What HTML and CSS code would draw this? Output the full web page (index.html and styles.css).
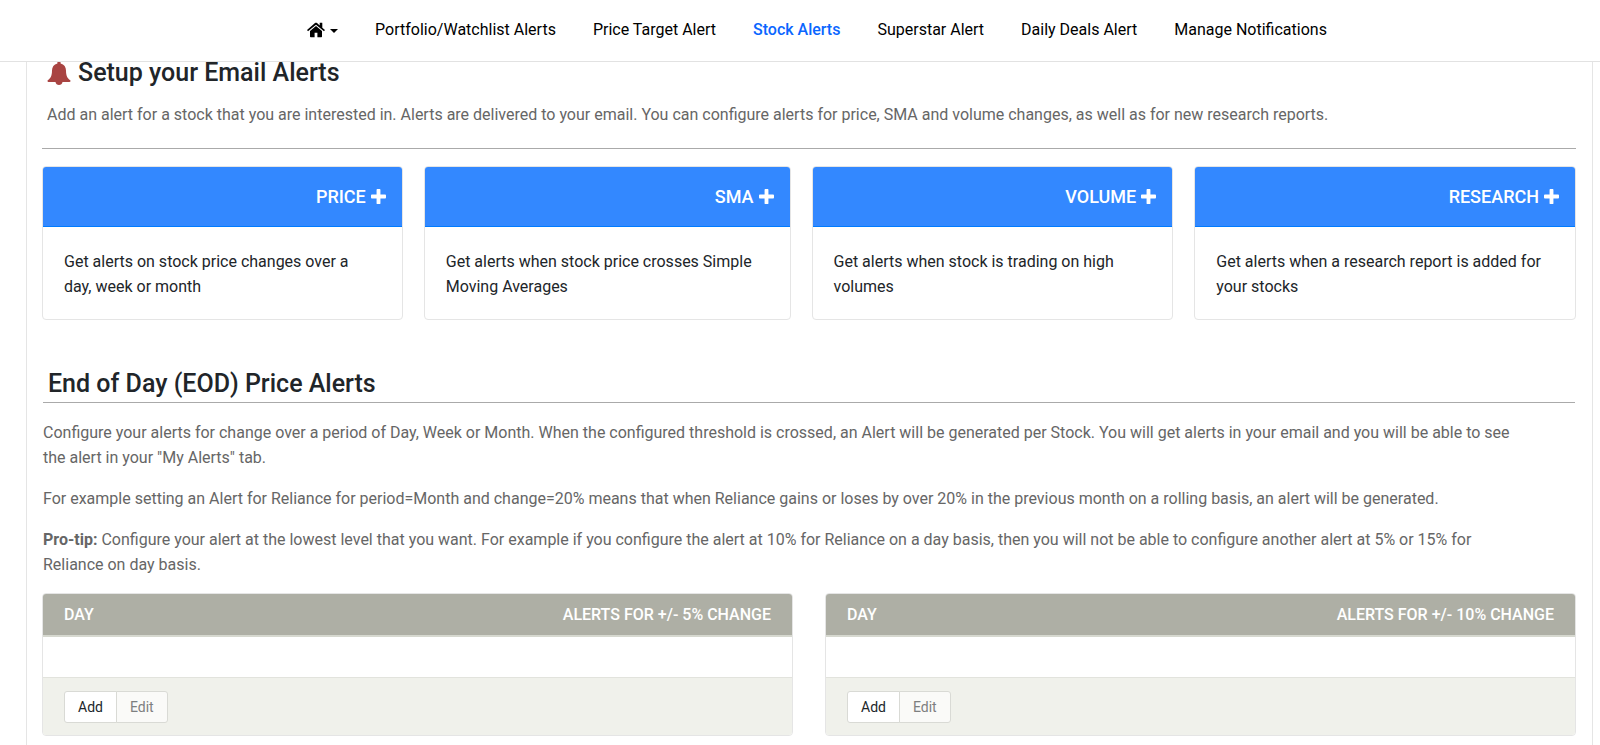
FILE: index.html
```html
<!DOCTYPE html>
<html lang="en">
  <head>
    <meta charset="UTF-8" />
    <meta name="viewport" content="width=device-width, initial-scale=1.0" />
    <title>Stock Alerts</title>
    <link rel="stylesheet" href="styles.css">
  </head>
  <body>
    <nav class="navbar">
      <a href="#" class="nav-link home" aria-label="Home">
        <svg class="icon-home" viewBox="0 0 18 16" aria-hidden="true">
          <path d="M9 4 3 9v5.500c0 .4.3.7.7.7h3.900V10.800h2.800v4.400h3.900c.4 0 .7-.3.7-.7V9z" />
          <path d="M17.700 7.800 15.300 5.700V1.200c0-.3-.1-.4-.4-.4h-1.800c-.3 0-.4.1-.4.4v2.200L10 1.100c-.6-.5-1.400-.5-2 0L.3 7.800c-.2.1-.2.3-.1.500l.6.7c.2.2.4.2.5.1L9 2.700l7.700 6.400c.1.1.3.1.5-.1l.6-.7c.1-.2.1-.4-.1-.5z" />
        </svg>
        <span class="caret"></span>
      </a>
      <a href="#" class="nav-link">Portfolio/Watchlist Alerts</a>
      <a href="#" class="nav-link">Price Target Alert</a>
      <a href="#" class="nav-link active">Stock Alerts</a>
      <a href="#" class="nav-link">Superstar Alert</a>
      <a href="#" class="nav-link">Daily Deals Alert</a>
      <a href="#" class="nav-link">Manage Notifications</a>
    </nav>

    <main class="main">
      <div class="intro">
        <h1 class="title">
          <svg class="icon-bell" viewBox="0 0 24 26" aria-hidden="true">
            <path d="M12 1c1 0 1.600.7 1.600 1.600v.8c3.600.8 5.400 3.600 5.400 7.100 0 5.500 1.500 7.800 4 9.600.4.300.5.600.5 1 0 .5-.4.900-.9.900h-7.100c-.2 1.900-1.700 3-3.500 3s-3.300-1.100-3.500-3H1.400c-.5 0-.9-.4-.9-.9 0-.4.1-.7.500-1 2.500-1.800 4-4.100 4-9.600 0-3.500 1.800-6.300 5.400-7.100v-.8C10.400 1.700 11 1 12 1z" />
          </svg>
          Setup your Email Alerts
        </h1>
        <p class="text">Add an alert for a stock that you are interested in. Alerts are delivered to your email. You can configure alerts for price, SMA and volume changes, as well as for new research reports.</p>
      </div>

      <!-- alert types -->
      <div class="types">
        <div class="card">
          <a href="#" class="card-link">PRICE
            <svg class="icon-plus" viewBox="0 0 14 14" aria-hidden="true"><path d="M6 0h2q.8 0 .8.800v4.400h4.400q.8 0 .8.800v2q0 .8-.8.800H8.800v4.400q0 .8-.8.800H6q-.8 0-.8-.8V8.800H.8Q0 8.800 0 8V6q0-.8.800-.8h4.400V.8Q5.200 0 6 0z" /></svg>
          </a>
          <p class="card-text">Get alerts on stock price changes over a day, week or month</p>
        </div>
        <div class="card">
          <a href="#" class="card-link">SMA
            <svg class="icon-plus" viewBox="0 0 14 14" aria-hidden="true"><path d="M6 0h2q.8 0 .8.800v4.400h4.400q.8 0 .8.800v2q0 .8-.8.800H8.800v4.400q0 .8-.8.800H6q-.8 0-.8-.8V8.800H.8Q0 8.800 0 8V6q0-.8.800-.8h4.400V.8Q5.200 0 6 0z" /></svg>
          </a>
          <p class="card-text">Get alerts when stock price crosses Simple Moving Averages</p>
        </div>
        <div class="card">
          <a href="#" class="card-link">VOLUME
            <svg class="icon-plus" viewBox="0 0 14 14" aria-hidden="true"><path d="M6 0h2q.8 0 .8.800v4.400h4.400q.8 0 .8.800v2q0 .8-.8.800H8.800v4.400q0 .8-.8.800H6q-.8 0-.8-.8V8.800H.8Q0 8.800 0 8V6q0-.8.800-.8h4.400V.8Q5.200 0 6 0z" /></svg>
          </a>
          <p class="card-text">Get alerts when stock is trading on high volumes</p>
        </div>
        <div class="card">
          <a href="#" class="card-link">RESEARCH
            <svg class="icon-plus" viewBox="0 0 14 14" aria-hidden="true"><path d="M6 0h2q.8 0 .8.800v4.400h4.400q.8 0 .8.800v2q0 .8-.8.800H8.800v4.400q0 .8-.8.800H6q-.8 0-.8-.8V8.800H.8Q0 8.800 0 8V6q0-.8.800-.8h4.400V.8Q5.200 0 6 0z" /></svg>
          </a>
          <p class="card-text">Get alerts when a research report is added for your stocks</p>
        </div>
      </div>

      <!-- end of day alerts -->
      <div class="eod">
        <h2 class="title section-title">End of Day (EOD) Price Alerts</h2>
        <div class="help">
          <p class="text">Configure your alerts for change over a period of Day, Week or Month. When the configured threshold is crossed, an Alert will be generated per Stock. You will get alerts in your email and you will be able to see the alert in your "My Alerts" tab.</p>
          <p class="text">For example setting an Alert for Reliance for period=Month and change=20% means that when Reliance gains or loses by over 20% in the previous month on a rolling basis, an alert will be generated.</p>
          <p class="text"><b>Pro-tip:</b> Configure your alert at the lowest level that you want. For example if you configure the alert at 10% for Reliance on a day basis, then you will not be able to configure another alert at 5% or 15% for Reliance on day basis.</p>
        </div>
      </div>

      <div class="alerts">
        <div class="card">
          <div class="alert-head"><span>DAY</span><span>ALERTS FOR +/- 5% CHANGE</span></div>
          <div class="alert-body"></div>
          <div class="alert-foot">
            <button type="button" class="btn">Add</button>
            <button type="button" class="btn" disabled>Edit</button>
          </div>
        </div>
        <div class="card">
          <div class="alert-head"><span>DAY</span><span>ALERTS FOR +/- 10% CHANGE</span></div>
          <div class="alert-body"></div>
          <div class="alert-foot">
            <button type="button" class="btn">Add</button>
            <button type="button" class="btn" disabled>Edit</button>
          </div>
        </div>
      </div>
    </main>
  </body>
</html>
```

FILE: styles.css
```css
* {
  box-sizing: border-box;
}
body {
  margin: 0;
  font-family: Roboto, "Liberation Sans", sans-serif;
  font-size: 16px;
  line-height: 25px;
  color: #212529;
  background-color: #fff;
}
.navbar {
  position: fixed;
  top: 0;
  left: 0;
  right: 0;
  height: 62px;
  padding: 0 0 2px 34px;
  display: flex;
  align-items: center;
  justify-content: center;
  gap: 37px;
  background-color: #fff;
  border-bottom: 1px solid #e2e2e2;
}
.nav-link {
  color: #000;
  text-decoration: none;
}
.nav-link.active {
  color: #0a66ff;
  font-weight: 500;
}
.home {
  display: flex;
  align-items: center;
  gap: 5px;
}
.icon-home {
  width: 18px;
  height: 16px;
}
.caret {
  border-top: 4px solid #000;
  border-left: 4px solid transparent;
  border-right: 4px solid transparent;
  margin-top: 3px;
}
.main {
  margin: 0 7px 0 26px;
  padding: 57px 16px 9px 15px;
  border-left: 1px solid #e5e5e5;
  border-right: 1px solid #e5e5e5;
}
.intro {
  padding: 0 5px 5px;
  margin-bottom: 17px;
  border-bottom: 1px solid #aaa;
}
.title {
  display: flex;
  align-items: center;
  gap: 7px;
  margin: 0 0 13px;
  font-size: 25px;
  font-weight: 500;
  line-height: 32px;
}
.icon-bell {
  width: 24px;
  height: 26px;
  fill: #a94442;
}
.icon-plus {
  width: 15px;
  height: 15px;
  fill: #fff;
}
.text {
  margin: 0 0 16px;
  color: #666;
}
.types {
  display: grid;
  grid-template-columns: 361fr 367fr 362fr 382fr;
  gap: 21px;
}
.card {
  border: 1px solid #e5e5e5;
  border-radius: 4px;
  overflow: hidden;
}
.card-link {
  display: flex;
  align-items: center;
  justify-content: flex-end;
  gap: 5px;
  height: 60px;
  padding: 0 16px;
  background-color: #3388ff;
  border-bottom: 1px solid #007bff;
  color: #fff;
  font-size: 18px;
  font-weight: 500;
  text-decoration: none;
}
.card-text {
  margin: 0;
  padding: 22px 28px 20px 21px;
}
.eod {
  padding: 0 1px;
}
.section-title {
  margin: 48px 0 17px;
  padding: 0 5px 2px;
  border-bottom: 1px solid #aaa;
}
.help {
  padding-right: 48px;
}
.alerts {
  display: grid;
  grid-template-columns: 1fr 1fr;
  gap: 32px;
}
.alert-head {
  display: flex;
  justify-content: space-between;
  padding: 8px 21px;
  background-color: #aeafa5;
  border-bottom: 2px solid #d6d8cf;
  color: #fff;
  font-weight: 500;
}
.alert-body {
  height: 40px;
}
.alert-foot {
  display: flex;
  padding: 13px 21px 12px;
  background-color: #f0f1eb;
  border-top: 1px solid #e2e3dd;
}
.btn {
  height: 32px;
  padding: 0 13px;
  background-color: #fff;
  border: 1px solid #d9dad5;
  border-radius: 3px 0 0 3px;
  color: #212529;
  font-family: inherit;
  font-size: 14px;
}
.btn + .btn {
  margin-left: -1px;
  border-radius: 0 3px 3px 0;
}
.btn:disabled {
  background-color: #fafaf8;
  color: #7d7f80;
}
```
